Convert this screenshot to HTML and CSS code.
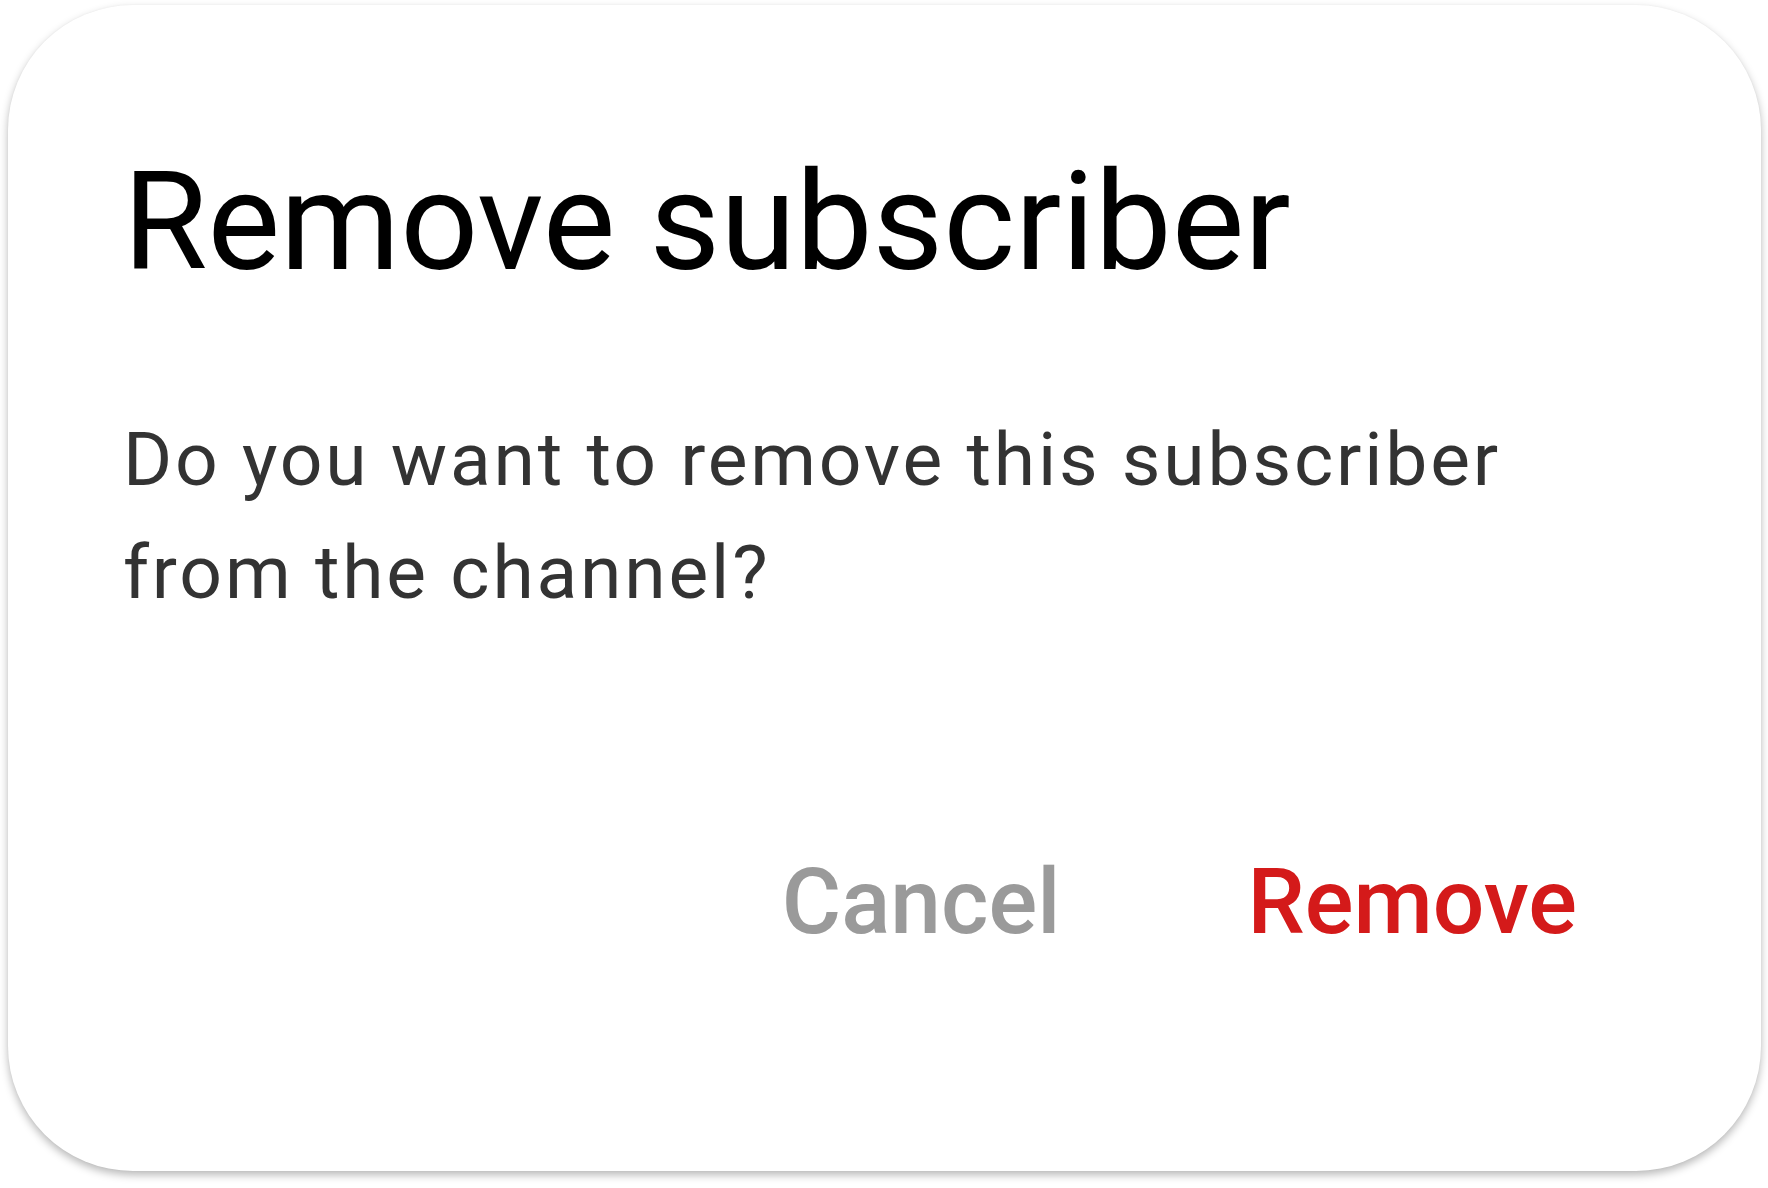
FILE: index.html
```html
<!DOCTYPE html>
<html lang="en">
<head>
<meta charset="utf-8">
<title>Remove subscriber</title>
<link rel="stylesheet" href="styles.css">
</head>
<body>
<div class="dialog">
  <h1 class="title">Remove subscriber</h1>
  <p class="message">Do you want to remove this subscriber from the channel?</p>
  <div class="actions">
    <button class="btn btn-cancel">Cancel</button>
    <button class="btn btn-remove">Remove</button>
  </div>
</div>
</body>
</html>
```

FILE: styles.css
```css
html, body {
  margin: 0;
  padding: 0;
  background: #ffffff;
}
body {
  width: 1768px;
  height: 1188px;
  overflow: hidden;
  font-family: Roboto, "Noto Sans", sans-serif;
}
.dialog {
  box-sizing: border-box;
  margin: 5px 7px 0 8px;
  width: 1753px;
  height: 1166px;
  background: #ffffff;
  border-radius: 125px;
  box-shadow: 0 4px 8px rgba(0, 0, 0, 0.28), 0 0 2px rgba(0, 0, 0, 0.04);
  padding: 135px 184px 0 115px;
  display: flex;
  flex-direction: column;
}
.title {
  margin: 0;
  font-size: 137px;
  font-weight: 400;
  line-height: 1.2;
  color: #000000;
  white-space: nowrap;
}
.message {
  margin: 99px 0 0 0;
  font-size: 75px;
  line-height: 113px;
  color: #333333;
  letter-spacing: 2.8px;
  max-width: 1450px;
}
.actions {
  margin-top: 219px;
  display: flex;
  justify-content: flex-end;
  gap: 187px;
}
.btn {
  background: none;
  border: none;
  padding: 0;
  font-family: Roboto, "Noto Sans", sans-serif;
  font-size: 91px;
  font-weight: 500;
  line-height: 1.2;
  cursor: pointer;
}
.btn-cancel {
  color: #9a9a9a;
}
.btn-remove {
  color: #d41a1a;
}
```
